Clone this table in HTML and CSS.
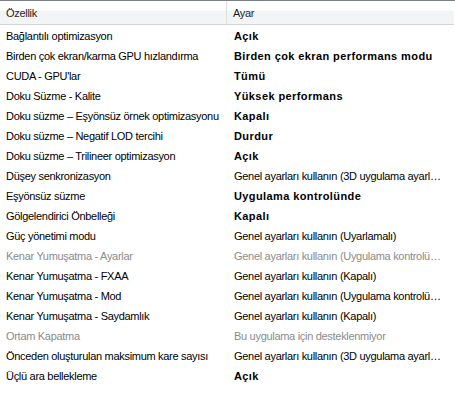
FILE: index.html
```html
<!DOCTYPE html>
<html lang="tr">
<head>
<meta charset="utf-8">
<title>Ayarlar</title>
<link rel="stylesheet" href="styles.css">
</head>
<body>
<div class="list">
  <div class="header">
    <div class="hcell col-name">Özellik</div>
    <div class="hcell col-value">Ayar</div>
  </div>
  <div class="rows">
    <div class="row"><div class="cell col-name">Bağlantılı optimizasyon</div><div class="cell col-value bold">Açık</div></div>
    <div class="row"><div class="cell col-name">Birden çok ekran/karma GPU hızlandırma</div><div class="cell col-value bold">Birden çok ekran performans modu</div></div>
    <div class="row"><div class="cell col-name">CUDA - GPU'lar</div><div class="cell col-value bold">Tümü</div></div>
    <div class="row"><div class="cell col-name">Doku Süzme - Kalite</div><div class="cell col-value bold">Yüksek performans</div></div>
    <div class="row"><div class="cell col-name">Doku süzme – Eşyönsüz örnek optimizasyonu</div><div class="cell col-value bold">Kapalı</div></div>
    <div class="row"><div class="cell col-name">Doku süzme – Negatif LOD tercihi</div><div class="cell col-value bold">Durdur</div></div>
    <div class="row"><div class="cell col-name">Doku süzme – Trilineer optimizasyon</div><div class="cell col-value bold">Açık</div></div>
    <div class="row"><div class="cell col-name">Düşey senkronizasyon</div><div class="cell col-value">Genel ayarları kullanın (3D uygulama ayarl…</div></div>
    <div class="row"><div class="cell col-name">Eşyönsüz süzme</div><div class="cell col-value bold">Uygulama kontrolünde</div></div>
    <div class="row"><div class="cell col-name">Gölgelendirici Önbelleği</div><div class="cell col-value bold">Kapalı</div></div>
    <div class="row"><div class="cell col-name">Güç yönetimi modu</div><div class="cell col-value">Genel ayarları kullanın (Uyarlamalı)</div></div>
    <div class="row disabled"><div class="cell col-name">Kenar Yumuşatma - Ayarlar</div><div class="cell col-value">Genel ayarları kullanın (Uygulama kontrolü…</div></div>
    <div class="row"><div class="cell col-name">Kenar Yumuşatma - FXAA</div><div class="cell col-value">Genel ayarları kullanın (Kapalı)</div></div>
    <div class="row"><div class="cell col-name">Kenar Yumuşatma - Mod</div><div class="cell col-value">Genel ayarları kullanın (Uygulama kontrolü…</div></div>
    <div class="row"><div class="cell col-name">Kenar Yumuşatma - Saydamlık</div><div class="cell col-value">Genel ayarları kullanın (Kapalı)</div></div>
    <div class="row disabled"><div class="cell col-name">Ortam Kapatma</div><div class="cell col-value">Bu uygulama için desteklenmiyor</div></div>
    <div class="row"><div class="cell col-name">Önceden oluşturulan maksimum kare sayısı</div><div class="cell col-value">Genel ayarları kullanın (3D uygulama ayarl…</div></div>
    <div class="row"><div class="cell col-name">Üçlü ara bellekleme</div><div class="cell col-value bold">Açık</div></div>
  </div>
</div>
</body>
</html>
```
FILE: styles.css
```css
html, body {
  margin: 0;
  padding: 0;
  background: #ffffff;
}
body {
  font-family: "Liberation Sans", Arial, sans-serif;
  font-size: 11px;
  letter-spacing: -0.3px;
  color: #000000;
}
.list {
  width: 455px;
  border-top: 1px solid #7b8086;
}
.header {
  display: grid;
  grid-template-columns: 227px 227px;
  width: 454px;
  height: 23px;
  background: linear-gradient(to bottom, #ffffff 0, #ffffff 9px, #f3f4f6 10px, #f3f4f6 100%);
  border-bottom: 1px solid #d5d5d5;
}
.hcell {
  display: flex;
  align-items: center;
  padding-left: 6px;
  color: #1f1f1f;
}
.hcell.col-name {
  border-right: 1px solid #dedfe0;
}
.rows {
  padding-top: 1px;
}
.row {
  display: grid;
  grid-template-columns: 227px 228px;
  height: 20px;
  align-items: center;
}
.cell {
  white-space: nowrap;
  overflow: hidden;
  text-overflow: ellipsis;
}
.cell.col-name {
  padding-left: 6px;
}
.cell.col-value {
  padding-left: 7px;
  padding-right: 4px;
}
.bold {
  font-weight: bold;
  letter-spacing: 0.4px;
}
.disabled .cell {
  color: #8b8b8b;
}
```
